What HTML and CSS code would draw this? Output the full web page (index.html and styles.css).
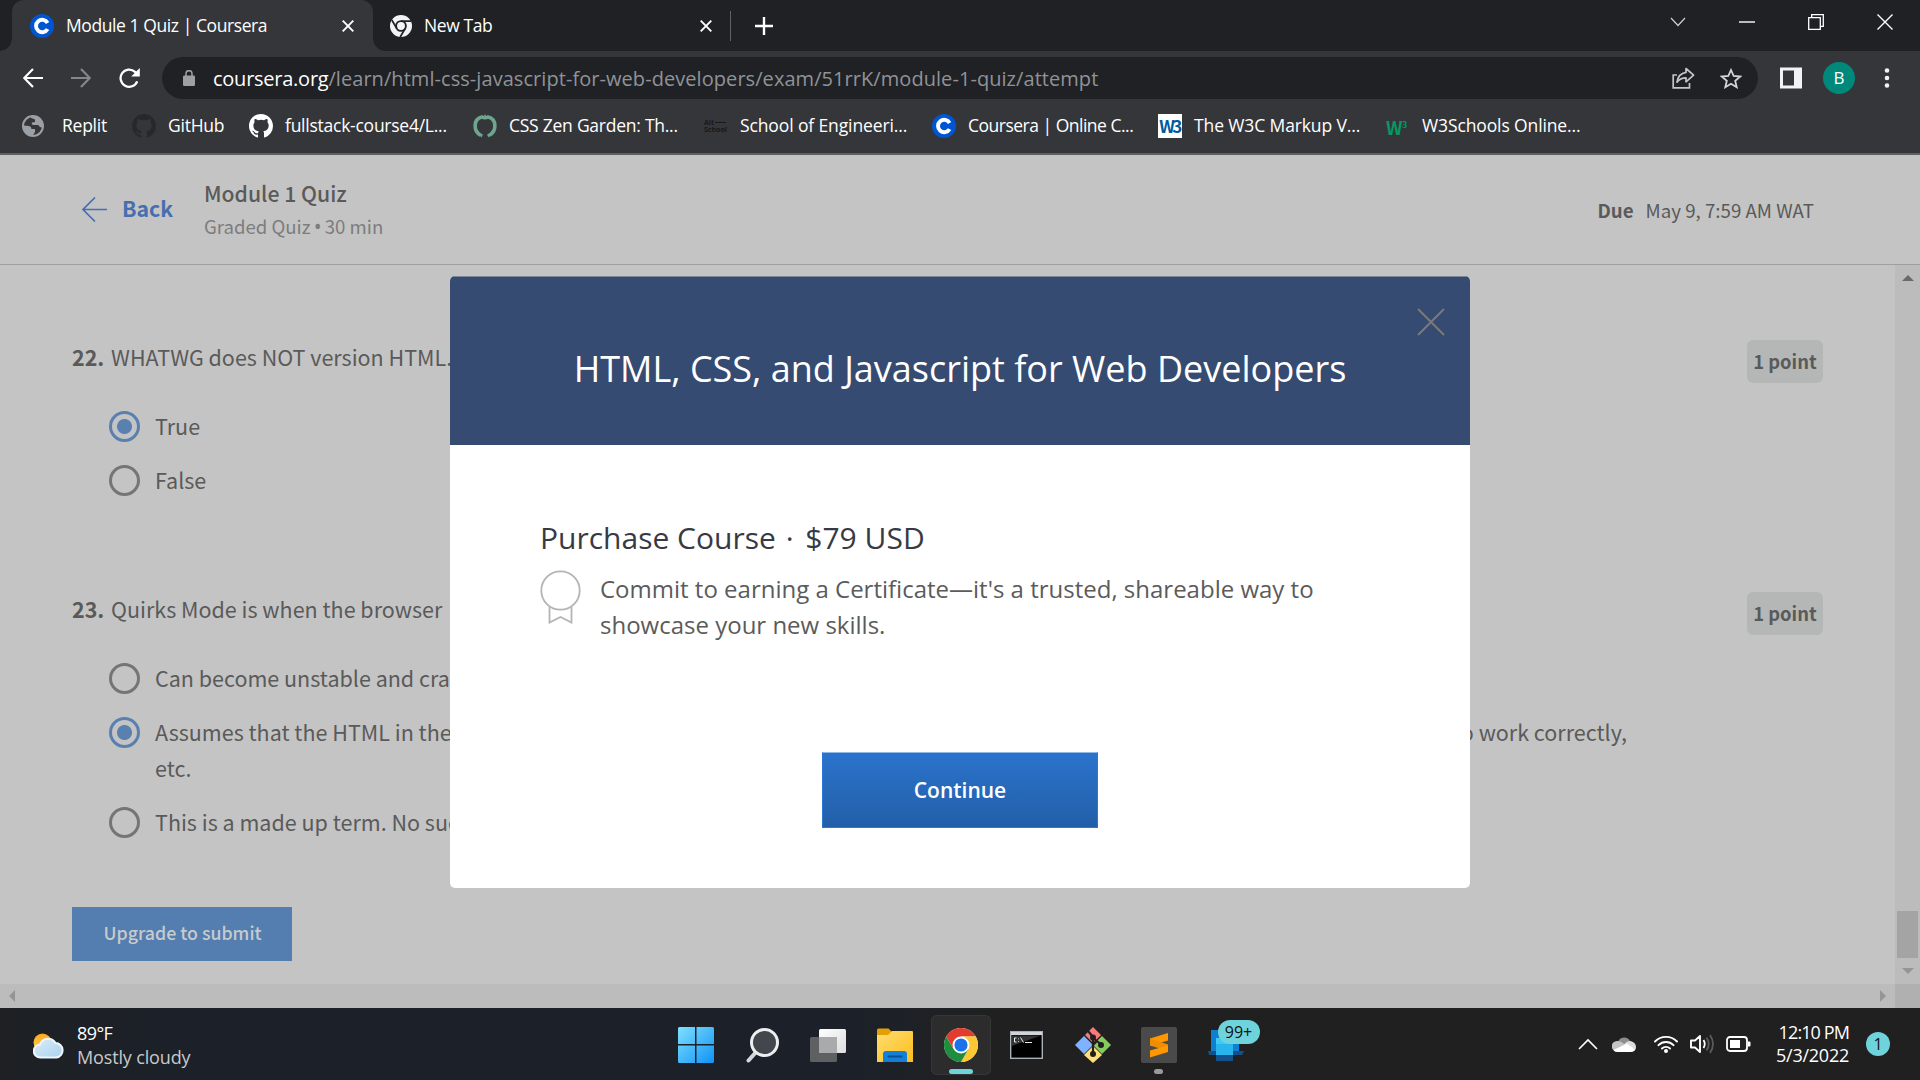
FILE: index.html
```html
<!DOCTYPE html>
<html lang="en">
<head>
<meta charset="utf-8">
<title>Module 1 Quiz | Coursera</title>
<link rel="stylesheet" href="styles.css">
</head>
<body>
<svg width="0" height="0" class="defs">
  <symbol id="coursera" viewBox="0 0 24 24"><circle cx="12" cy="12" r="12" fill="#0056d2"/><path d="M17.6 8.9A6.2 6.2 0 1 0 17.6 15.1" fill="none" stroke="#fff" stroke-width="3.9"/></symbol>
  <symbol id="github" viewBox="0 0 16 16"><path d="M8 0C3.58 0 0 3.58 0 8c0 3.54 2.29 6.53 5.47 7.59.4.07.55-.17.55-.38 0-.19-.01-.82-.01-1.49-2.01.37-2.53-.49-2.69-.94-.09-.23-.48-.94-.82-1.13-.28-.15-.68-.52-.01-.53.63-.01 1.08.58 1.23.82.72 1.21 1.87.87 2.33.66.07-.52.28-.87.51-1.07-1.78-.2-3.64-.89-3.64-3.95 0-.87.31-1.59.82-2.15-.08-.2-.36-1.02.08-2.12 0 0 .67-.21 2.2.82a7.6 7.6 0 0 1 4 0c1.53-1.04 2.2-.82 2.2-.82.44 1.1.16 1.92.08 2.12.51.56.82 1.27.82 2.15 0 3.07-1.87 3.75-3.65 3.95.29.25.54.73.54 1.48 0 1.07-.01 1.93-.01 2.2 0 .21.15.46.55.38A8.01 8.01 0 0 0 16 8c0-4.42-3.58-8-8-8z"/></symbol>
  <symbol id="x" viewBox="0 0 12 12"><path d="M.7.7 11.3 11.3M11.3.7.7 11.3" fill="none" stroke="currentColor" stroke-width="1.9"/></symbol>
</svg>

<div class="tabstrip">
  <div class="tab tab-active">
    <svg class="ico24"><use href="#coursera"/></svg>
    <span class="tab-title t-quiz">Module 1 Quiz | Coursera</span>
    <svg class="tab-x"><use href="#x"/></svg>
  </div>
  <div class="tab tab-new">
    <svg class="ico22" viewBox="0 0 22 22"><circle cx="11" cy="11" r="11" fill="#f1f3f4"/><circle cx="11" cy="11" r="4.9" fill="none" stroke="#202124" stroke-width="1.9"/><path d="M11 6.1h10M6.8 13.5 1.8 5M15.2 13.5 10.2 22" stroke="#202124" stroke-width="1.7" fill="none"/></svg>
    <span class="tab-title t-new">New Tab</span>
    <svg class="tab-x"><use href="#x"/></svg>
  </div>
  <div class="tab-sep"></div>
  <svg class="plus" viewBox="0 0 18 18"><path d="M9 0v18M0 9h18" stroke="#fff" stroke-width="2.4"/></svg>
  <div class="win-controls">
    <svg width="16" height="10" viewBox="0 0 16 10"><path d="M1 1l7 7.5L15 1" fill="none" stroke="#cfd0d2" stroke-width="1.2"/></svg>
    <svg width="16" height="2" viewBox="0 0 16 2"><path d="M0 1h16" stroke="#fff" stroke-width="1.4"/></svg>
    <svg width="16" height="16" viewBox="0 0 16 16"><path d="M.7 3.7h11.6v11.6H.7zM3.7 3.7v-3h11.6v11.6h-3" fill="none" stroke="#fff" stroke-width="1.3"/></svg>
    <svg width="16" height="16" viewBox="0 0 16 16"><path d="M.5.5l15 15M15.5.5l-15 15" stroke="#fff" stroke-width="1.4"/></svg>
  </div>
</div>

<div class="toolbar">
  <svg class="nav" viewBox="0 0 20 20"><path d="M20 10H1.5M10 1 1.2 10 10 19" fill="none" stroke="#fff" stroke-width="2.2"/></svg>
  <svg class="nav" viewBox="0 0 20 20"><path d="M0 10h18.5M10 1l8.8 9-8.8 9" fill="none" stroke="#85868a" stroke-width="2.2"/></svg>
  <svg class="nav reload" viewBox="0 0 21 20"><path d="M18.2 13.3A8.6 8.6 0 1 1 16 3.8L18.5 6.2" fill="none" stroke="#fff" stroke-width="2.3"/><path d="M20.8 0v8.6h-8.6z" fill="#fff"/></svg>
  <div class="omnibox">
    <svg class="lock" viewBox="0 0 12 16"><path d="M1.2 5.5h9.6q1.2 0 1.2 1.2v8.1q0 1.2-1.2 1.2H1.2Q0 16 0 14.8V6.7q0-1.2 1.2-1.2z" fill="#9aa0a6"/><path d="M3 6V3.7a3 3 0 0 1 6 0V6" fill="none" stroke="#9aa0a6" stroke-width="1.5"/></svg>
    <div class="url"><span class="host">coursera.org</span><span class="path">/learn/html-css-javascript-for-web-developers/exam/51rrK/module-1-quiz/attempt</span></div>
    <svg class="share" viewBox="0 0 23 22"><path d="M5 8H1.2v12.8h16.3V16" fill="none" stroke="#c4c5c7" stroke-width="1.7"/><path d="M14 1.5l7.6 6.7-7.6 6.6v-4c-4 0-6.8 1.2-9 4.4.7-5 3.6-9 9-9.8z" fill="none" stroke="#c4c5c7" stroke-width="1.7" stroke-linejoin="round"/></svg>
    <svg class="star" viewBox="0 0 22 21"><path d="M11 2l2.7 6 6.4.6-4.9 4.3 1.5 6.3L11 15.8l-5.7 3.4 1.5-6.3L1.9 8.6 8.3 8z" fill="none" stroke="#d5d6d8" stroke-width="1.8"/></svg>
  </div>
  <svg class="panel" viewBox="0 0 22 21"><path d="M1.5 1.5h19v18h-19z" fill="none" stroke="#f1f3f4" stroke-width="3"/><path d="M14 1h7v19h-7z" fill="#f1f3f4"/></svg>
  <div class="avatar">B</div>
  <svg class="dots" viewBox="0 0 6 20"><circle cx="3" cy="2.5" r="2.3"/><circle cx="3" cy="10" r="2.3"/><circle cx="3" cy="17.5" r="2.3"/></svg>
</div>

<div class="bookmarks">
  <div class="bm first"><svg viewBox="0 0 22 22"><circle cx="11" cy="11" r="10" fill="#35363a" stroke="#9aa0a6" stroke-width="2"/><path d="M1.500 10.500 7 11q2.500.5 2.500 3h3.500v3l-2.500 4Q3 20 1.500 13zM8 2.500 13 1q6 2 7.500 8v3.500q-3 .5-4-2.500h-5q-2.500-.5-1.500-2.500l3-.5V4.500z" fill="#9aa0a6"/></svg><span>Replit</span></div>
  <div class="bm"><svg fill="#24292e"><use href="#github"/></svg><span>GitHub</span></div>
  <div class="bm"><svg fill="#fff"><use href="#github"/></svg><span>fullstack-course4/L...</span></div>
  <div class="bm"><svg viewBox="0 0 24 24"><path d="M8 21.500C0 17.500 0 5 9 3q3 1.500 6 0c9 2 9 14.500 1 18.500" fill="none" stroke="#6fa58f" stroke-width="3.6"/><path d="M10 4l2-4 2 4zM5.500 19l3 4.500 1.500-3zM18.500 19l-3 4.500-1.500-3z" fill="#6fa58f"/></svg><span>CSS Zen Garden: Th...</span></div>
  <div class="bm"><div class="alt"><b>Alt<i></i></b><b>School</b></div><span class="school">School of Engineeri...</span></div>
  <div class="bm"><svg><use href="#coursera"/></svg><span class="tight">Coursera | Online C...</span></div>
  <div class="bm"><div class="w3c">W3</div><span class="school">The W3C Markup V...</span></div>
  <div class="bm"><div class="w3s">W<sup>3</sup></div><span class="school">W3Schools Online...</span></div>
</div>

<main class="page">
  <header class="quiz-head">
    <svg class="back-arrow" viewBox="0 0 25 25"><path d="M25 12.500H1M13 .5 1 12.500l12 12" fill="none" stroke="#476fae" stroke-width="1.7"/></svg>
    <span class="back">Back</span>
    <div class="quiz-name"><div class="name">Module 1 Quiz</div><div class="kind">Graded Quiz <span class="bullet">•</span> 30 min</div></div>
    <div class="due"><b>Due</b><span>May 9, 7:59 AM WAT</span></div>
  </header>
  <div class="scroller">
    <div class="questions">
      <section class="question">
        <div class="prompt"><b class="num">22.</b><span>WHATWG does NOT version HTML.</span><span class="points">1 point</span></div>
        <div class="opt"><i class="radio on"></i><span>True</span></div>
        <div class="opt"><i class="radio"></i><span>False</span></div>
      </section>
      <section class="question">
        <div class="prompt"><b class="num">23.</b><span>Quirks Mode is when the browser</span><span class="points">1 point</span></div>
        <div class="opt"><i class="radio"></i><span>Can become unstable and cra</span></div>
        <div class="opt"><i class="radio on"></i><div class="long"><div class="split"><span>Assumes that the HTML in the</span><span>to work correctly,</span></div>etc.</div></div>
        <div class="opt"><i class="radio"></i><span>This is a made up term. No suc</span></div>
      </section>
      <button class="submit">Upgrade to submit</button>
    </div>
    <div class="vbar"><svg class="up" width="12" height="6"><path d="M0 6 6 0l6 6z" fill="#6a6a6a"/></svg><div class="thumb"></div><svg class="down" width="12" height="6"><path d="M0 0h12L6 6z" fill="#959595"/></svg></div>
  </div>
  <div class="hbar"><svg width="6" height="12"><path d="M6 0v12L0 6z" fill="#959595"/></svg><svg width="6" height="12"><path d="M0 0v12l6-6z" fill="#959595"/></svg><div class="corner"></div></div>

  <div class="modal">
    <div class="modal-head">
      <svg class="modal-x" viewBox="0 0 28 28"><path d="M1 1l26 26M27 1 1 27" stroke="#7b7a78" stroke-width="2"/></svg>
      <h1>HTML, CSS, and Javascript for Web Developers</h1>
    </div>
    <div class="modal-body">
      <h2>Purchase Course <span class="dot">·</span> $79 USD</h2>
      <div class="offer">
        <svg class="ribbon" viewBox="0 0 42 56"><path d="M9.500 37v15.500l11-5.500 11 5.500V37" fill="none" stroke="#b4b4b4" stroke-width="1.8"/><circle cx="20.5" cy="20.5" r="19.2" fill="#fff" stroke="#b4b4b4" stroke-width="1.8"/></svg>
        <p>Commit to earning a Certificate—it's a trusted, shareable way to<br>showcase your new skills.</p>
      </div>
      <button class="continue">Continue</button>
    </div>
  </div>
</main>

<footer class="taskbar">
  <div class="weather">
    <svg width="32" height="26" viewBox="0 0 32 26"><defs><linearGradient id="sun" x1="0" y1="0" x2="0" y2="1"><stop offset="0" stop-color="#f9a825"/><stop offset="1" stop-color="#ffd54f"/></linearGradient><linearGradient id="cl" x1="0" y1="0" x2="1" y2="1"><stop offset="0" stop-color="#dcebf6"/><stop offset="1" stop-color="#a9d3ef"/></linearGradient></defs><circle cx="9.5" cy="9.5" r="9" fill="url(#sun)"/><path d="M7.500 24.500a6.500 6.500 0 0 1-.5-13 8.500 8.500 0 0 1 15.500-1.500 7.300 7.300 0 0 1 1 14.500z" fill="url(#cl)" stroke="#eef6fc" stroke-width="2"/></svg>
    <div class="wx"><div class="temp">89°F</div><div class="cond">Mostly cloudy</div></div>
  </div>
  <div class="apps">
    <div class="app"><svg width="36" height="36" viewBox="0 0 36 36"><defs><linearGradient id="win" gradientUnits="userSpaceOnUse" x1="0" y1="0" x2="36" y2="36"><stop offset="0" stop-color="#7fe0ff"/><stop offset="1" stop-color="#0f93f5"/></linearGradient></defs><path d="M1.500 0H17v17H0V1.500Q0 0 1.500 0zM18.500 0h16Q36 0 36 1.500V17H18.500zM0 18.500h17V36H1.500Q0 36 0 34.500zM18.500 18.500H36v16q0 1.500-1.500 1.500h-16z" fill="url(#win)"/></svg></div>
    <div class="app"><svg class="search" width="34" height="36" viewBox="0 0 34 36"><path d="M11 24 2.500 33.500" stroke="#d5d8da" stroke-width="4" stroke-linecap="round"/><circle cx="18.5" cy="15.5" r="13" fill="#42474d" stroke="#eceeef" stroke-width="3"/></svg></div>
    <div class="app"><svg width="36" height="34" viewBox="0 0 36 34"><defs><linearGradient id="tv" x1="0" y1="0" x2="1" y2="1"><stop offset="0" stop-color="#fff"/><stop offset="1" stop-color="#ddd"/></linearGradient></defs><rect x="9" y="1" width="27" height="24" rx="1.5" fill="url(#tv)"/><rect x="0" y="9" width="27" height="25" rx="1.5" fill="#5e6062"/><path d="M9 9h18v16H9z" fill="#a9aaab"/></svg></div>
    <div class="app"><svg width="36" height="34" viewBox="0 0 36 34"><defs><linearGradient id="fo" x1="0" y1="0" x2="1" y2="1"><stop offset="0" stop-color="#ffdd70"/><stop offset="1" stop-color="#fcbd1f"/></linearGradient></defs><path d="M0 2Q0 .5 1.500.5h10L15 4l-3 4H0z" fill="#e2a006"/><path d="M0 7h11l4-4h20q1 0 1 1v30H0z" fill="url(#fo)"/><path d="M6 34V26q0-3 3-3h18q3 0 3 3v8z" fill="#1180d6"/><rect x="10.5" y="27.5" width="15" height="2" rx="1" fill="#0a4f94"/></svg></div>
    <div class="app current"><svg width="34" height="34" viewBox="0 0 48 48"><circle cx="24" cy="24" r="24" fill="#fff"/><path d="M24 12h20.780A24 24 0 0 0 3.220 12L13.600 30z" fill="#e33b2e"/><path d="M34.400 30 24 48A24 24 0 0 0 44.780 12H24z" fill="#fcc934"/><path d="M13.600 30 3.220 12A24 24 0 0 0 24 48l10.400-18z" fill="#1e8e3e"/><circle cx="24" cy="24" r="12" fill="#fff"/><circle cx="24" cy="24" r="9.3" fill="#1a73e8"/></svg><i class="run"></i></div>
    <div class="app"><svg width="33" height="28" viewBox="0 0 33 28"><rect x=".7" y=".7" width="31.6" height="26.6" fill="#000" stroke="#a9b0b7" stroke-width="1.4"/><path d="M1 1h31v3H1z" fill="#cfd5da"/><path d="M2 4.500h29L2 15z" fill="#333"/><path d="M6.500 7H4.500v4h2M8.500 7.500v.8M8.500 10v.8M10.500 6.500l3 5M15 11.500h7" stroke="#eee" stroke-width="1" fill="none"/></svg></div>
    <div class="app"><svg width="38" height="38" viewBox="0 0 38 38"><path d="M19 1l8 8-8 8-8-8z" fill="#f77b7b"/><path d="M28 10l9 9-9 9-9-9z" fill="#85cc5c"/><path d="M10 10l9 9-9 9-9-9z" fill="#80b3ff"/><path d="M19 20l9 9-9 8-9-8z" fill="#ffe07a"/><path d="M14 5l5 6v17M19 12l9 7M19 19l4-4" fill="none" stroke="#221f20" stroke-width="2.2"/><circle cx="19" cy="11.5" r="3" fill="#221f20"/><circle cx="27" cy="19" r="3" fill="#221f20"/><circle cx="19" cy="28" r="3" fill="#221f20"/></svg></div>
    <div class="app"><svg width="36" height="36" viewBox="0 0 36 36"><rect width="36" height="36" rx="2" fill="#4a4a4a"/><path d="M27 6v7.500L9 19v-7.500z" fill="#ff9800"/><path d="M9 11.500 27 17.500V24L9 18.500z" fill="#f08c00"/><path d="M27 18.500V25L9 30.500V23.500z" fill="#ff9800"/></svg><i class="run idle"></i></div>
    <div class="app"><svg width="36" height="34" viewBox="0 0 36 34"><path d="M3 2h28v22H3z" fill="#0f7fd0"/><path d="M0 23h36l-2 4H1z" fill="#14508c"/><path d="M8 10h17v22H8z" fill="#28b5ee"/><path d="M8 10h17v6H8z" fill="#40caf7"/><path d="M8 27h17v6H8z" fill="#14508c"/></svg><span class="badge">99+</span></div>
  </div>
  <div class="tray">
    <svg width="20" height="12" viewBox="0 0 20 12"><path d="M1 11l9-9 9 9" fill="none" stroke="#fff" stroke-width="1.6"/></svg>
    <svg class="cloud" width="24" height="16" viewBox="0 0 24 16"><path d="M6 6a6.500 6.500 0 0 1 12-1l-6 5z" fill="#8e8e8e"/><path d="M5 15.500A5 5 0 0 1 5 5q4-.5 8 3.500l-9 7z" fill="#c4c4c4"/><path d="M12 8.500q3-4 6.500-3.500Q24 6.500 24 11t-5 4.500z" fill="#dcdcdc"/><path d="M1.500 14 15 7.500 23 13.500q-1.500 2.500-4 2.500H5q-2.500 0-3.500-2z" fill="#fff"/></svg>
    <svg class="wifi" width="24" height="18" viewBox="0 0 24 18"><g fill="none" stroke="#fff" stroke-width="1.9" stroke-linecap="round"><path d="M1 6.500a15.500 15.500 0 0 1 22 0M4.500 10.200a10.500 10.500 0 0 1 15 0M8 13.500a5.700 5.700 0 0 1 8 0"/></g><circle cx="12" cy="16" r="2" fill="#fff"/></svg>
    <svg class="sound" width="25" height="20" viewBox="0 0 25 20"><path d="M1 6.500h4L10 2v16l-5-4.500H1z" fill="none" stroke="#fff" stroke-width="1.9" stroke-linejoin="round"/><path d="M13.500 6q2.500 4 0 8" fill="none" stroke="#fff" stroke-width="1.8"/><path d="M16.500 3.500q4.500 6.500 0 13M20 1q6 9 0 18" fill="none" stroke="#5a5a5a" stroke-width="1.8"/></svg>
    <svg class="battery" width="25" height="16" viewBox="0 0 25 16"><rect x="1" y="1" width="20" height="14" rx="3" fill="none" stroke="#fff" stroke-width="1.8"/><rect x="4" y="4" width="10" height="8" fill="#fff"/><path d="M22 5.500h1.500q1 0 1 1v3q0 1-1 1H22z" fill="#fff"/></svg>
    <div class="clock"><div class="time">12:10 PM</div><div>5/3/2022</div></div>
    <div class="notif">1</div>
  </div>
</footer>
</body>
</html>
```
FILE: styles.css
```css
* { box-sizing: border-box; }
body { margin: 0; width: 1920px; height: 1080px; overflow: hidden; display: flex; flex-direction: column; font-family: "Open Sans", "Noto Sans", sans-serif; background: #35363a; }
.defs { position: absolute; }
svg { display: block; flex: none; }
button { border: 0; font: inherit; }
span { white-space: nowrap; }

.tabstrip { height: 51px; flex: none; display: flex; align-items: center; background: #202124; color: #fff; font-size: 17.5px; padding-left: 12px; }
.tab { height: 51px; display: flex; align-items: center; }
.tab-title { letter-spacing: -.42px; padding-bottom: 1px; }
.tab-active { width: 361px; padding-left: 18px; background: #35363a; border-radius: 12px 12px 0 0; position: relative; }
.tab-active::before, .tab-active::after { content: ""; position: absolute; bottom: 0; width: 12px; height: 12px; }
.tab-active::before { left: -12px; background: radial-gradient(circle at 0 0, transparent 11.5px, #35363a 12px); }
.tab-active::after { right: -12px; background: radial-gradient(circle at 100% 0, transparent 11.5px, #35363a 12px); }
.ico24 { width: 24px; height: 24px; }
.ico22 { width: 22px; height: 22px; }
.t-quiz { margin-left: 12px; width: 276px; }
.tab-new { padding-left: 17px; width: 357px; }
.t-new { margin-left: 12px; width: 276px; }
.tab-x { width: 12px; height: 12px; }
.tab-sep { width: 1px; height: 30px; background: #5f6368; }
.plus { width: 18px; height: 18px; margin-left: 24px; }
.win-controls { margin-left: auto; display: flex; align-items: center; gap: 53px; padding: 0 27px 8px 0; }

.toolbar { height: 54px; flex: none; display: flex; align-items: center; background: #35363a; }
.nav { width: 20px; height: 20px; margin-left: 23px; }
.nav + .nav { margin-left: 28px; }
.nav + .reload { width: 21px; margin-left: 28px; }
.omnibox { width: 1596px; height: 42px; margin-left: 22px; border-radius: 21px; background: #202124; display: flex; align-items: center; padding-left: 21px; }
.lock { width: 12px; height: 16px; }
.url { font-size: 20px; margin-left: 18px; width: 1459px; white-space: nowrap; }
.host { color: #fff; letter-spacing: -.25px; }
.path { color: #8f9398; letter-spacing: .06px; }
.share { width: 23px; height: 22px; }
.star { width: 22px; height: 21px; margin-left: 25px; }
.panel { width: 22px; height: 22px; margin-left: 22px; }
.avatar { width: 32px; height: 32px; border-radius: 50%; margin-left: 21px; background: #00897b; color: #fff; font: 17px/32px "Open Sans", sans-serif; text-align: center; }
.dots { width: 6px; height: 20px; margin-left: 29px; fill: #f1f3f4; }

.bookmarks { height: 50px; flex: none; display: grid; grid-template-columns: 111px 117px 224px 231px 228px 226px 228px auto; padding: 0 0 7px 21px; border-bottom: 2px solid #5f6066; background: #35363a; color: #fff; font-size: 17.5px; letter-spacing: -.25px; }
.bm { display: flex; align-items: center; gap: 12px; }
.bm span { padding-bottom: 1px; }
.first { gap: 18px; }
.bm svg { width: 24px; height: 24px; }
.bm.first svg { width: 22px; height: 22px; margin-left: 1px; }
.bm .tight { letter-spacing: -.5px; }
.bm .school { letter-spacing: -.12px; }
.alt { width: 24px; color: #17181a; font: 7px/7px "Open Sans", sans-serif; letter-spacing: 0; }
.alt b { display: block; }
.alt i { display: inline-block; width: 11px; height: 1px; background: #17181a; margin-left: 1px; vertical-align: middle; }
.w3c { width: 24px; height: 24px; background: #fff; color: #005a9c; font: 17px/24px "Noto Sans CJK SC", sans-serif; font-weight: bold; letter-spacing: -2.5px; text-align: center; padding-right: 1px; }
.w3s { width: 24px; height: 20px; color: #059862; font: bold 18px/22px "Noto Sans CJK SC", sans-serif; letter-spacing: -.5px; white-space: nowrap; }
.w3s sup { font-size: 9px; line-height: 0; vertical-align: 7px; }

.page { height: 853px; flex: none; position: relative; display: flex; flex-direction: column; background: #c4c4c4; color: #5a5a5a; font-family: "Noto Sans CJK SC", sans-serif; font-size: 21.5px; }
.quiz-head { height: 110px; border-bottom: 1px solid #9f9f9f; display: flex; padding-left: 82px; }
.back-arrow { width: 25px; height: 25px; margin-top: 42px; }
.back { margin: 35px 0 0 15px; width: 82px; color: #476fae; font-weight: bold; line-height: 36px; font-size: 21.3px; }
.quiz-name { padding-top: 21px; }
.name { font-weight: 500; font-size: 21.2px; line-height: 34px; }
.kind { font-size: 18.6px; line-height: 32px; color: #7d7d7d; }
.bullet { font-family: "Open Sans", sans-serif; font-size: 21px; line-height: 1; margin: 0 -1px; }
.due { margin: 38px 0 0 auto; padding-right: 106px; font-size: 18.7px; line-height: 34px; display: flex; gap: 12px; }
.scroller { height: 719px; display: flex; }
.questions { width: 1895px; padding: 74px 72px 0; }
.question { height: 252px; }
.question + .question { height: 316px; }
.prompt { display: flex; line-height: 36px; height: 69px; }
.num { width: 39px; }
.points { margin: 1px 0 0 auto; width: 76px; height: 43px; border-radius: 6px; background: #b5b7b6; font-size: 18.4px; font-weight: bold; line-height: 43px; text-align: center; }
.opt { display: flex; line-height: 36px; margin: 0 0 18px 37px; }
.radio { width: 31px; height: 31px; flex: none; margin: 3px 15px 0 0; border: 3px solid #757575; border-radius: 50%; }
.radio.on { border-color: #5a80b0; background: radial-gradient(circle, #5a80b0 7px, transparent 8px); }
.split { width: 1472px; display: flex; justify-content: space-between; }
.submit { width: 220px; height: 54px; background: #537eaf; color: #c8cacd; font-size: 17.8px; font-weight: 500; padding: 0 0 4px 1px; }
.vbar { width: 25px; background: #bcbcbc; display: flex; flex-direction: column; align-items: center; padding-top: 10px; }
.thumb { width: 21px; height: 47px; margin-top: 630px; background: #a4a4a4; }
.down { margin-top: 10px; }
.hbar { height: 24px; background: #bcbcbc; display: flex; align-items: center; padding-left: 9px; }
.hbar svg + svg { margin-left: 1865px; }
.corner { width: 25px; height: 24px; margin-left: auto; background: #b0b0b0; }

.modal { position: absolute; left: 450px; top: 121px; width: 1020px; height: 612px; border-radius: 5px; overflow: hidden; background: #fff; font-family: "Open Sans", sans-serif; }
.modal-head { height: 169px; background: #364b71; border-top: 1px solid #7d8798; color: #fff; padding: 31px 25px 0 0; }
.modal-x { width: 28px; height: 28px; margin-left: auto; }
h1 { margin: 6px -25px 0 0; font-size: 36px; line-height: 54px; font-weight: 400; text-align: center; }
.modal-body { padding: 70px 90px 0; display: flex; flex-direction: column; }
h2 { margin: 0; font-size: 30px; line-height: 45px; font-weight: 400; color: #373a44; white-space: nowrap; }
.dot { margin: 0 4px 0 2px; }
.offer { display: flex; margin-top: 11px; }
.ribbon { width: 42px; height: 56px; margin: -1px 18px 0 0; }
.offer p { margin: 0; font-size: 24px; line-height: 36px; color: #5b5b5b; white-space: nowrap; }
.continue { align-self: center; width: 276px; height: 76px; margin-top: 109px; border: 1px solid #2a78d4; border-top-color: #8fb8e8; background: linear-gradient(#2a73cc, #235fa8); color: #fff; font-weight: 600; font-size: 21px; }

.taskbar { height: 72px; flex: none; display: flex; position: relative; color: #fff; font-size: 18px; background: linear-gradient(90deg, #1e2024 0, #1c2029 200px, #1c2129 850px, #202020 1000px, #202020 100%); }
.weather { width: 671px; display: flex; padding-left: 33px; }
.weather svg { margin-top: 25px; }
.wx { margin: 13px 0 0 12px; line-height: 24px; }
.temp { letter-spacing: -.6px; }
.cond { color: #c8c9cb; letter-spacing: -.15px; }
.apps { display: flex; gap: 6.2px; padding-top: 7px; margin-left: -5px; }
.app { width: 60px; height: 60px; display: flex; align-items: center; justify-content: center; position: relative; border-radius: 6px; }
.search { margin-left: 2px; }
.current { background: #2c2c2c; box-shadow: inset 0 0 0 1px #363636; }
.run { position: absolute; bottom: 1px; left: 18px; width: 24px; height: 5px; border-radius: 3px; background: #6fd3dc; }
.idle { left: 25px; width: 9px; background: #9a9a9a; }
.badge { position: absolute; left: 22px; top: 5px; width: 42px; height: 24px; border-radius: 12px; background: #6fd3dc; color: #111; font-size: 16px; line-height: 24px; text-align: center; }
.tray { margin-left: auto; display: flex; align-items: center; padding-right: 30px; }
.cloud { margin-left: 14px; }
.wifi { margin-left: 18px; }
.sound { margin-left: 12px; }
.battery { margin-left: 11px; }
.clock { margin-left: 25px; width: 73px; display: flex; flex-direction: column; align-items: flex-end; line-height: 23px; white-space: nowrap; letter-spacing: -.25px; }
.time { letter-spacing: -.9px; }
.notif { width: 24px; height: 24px; margin-left: 17px; border-radius: 50%; background: #6fd3dc; color: #111; font-size: 16px; line-height: 24px; text-align: center; }
```
